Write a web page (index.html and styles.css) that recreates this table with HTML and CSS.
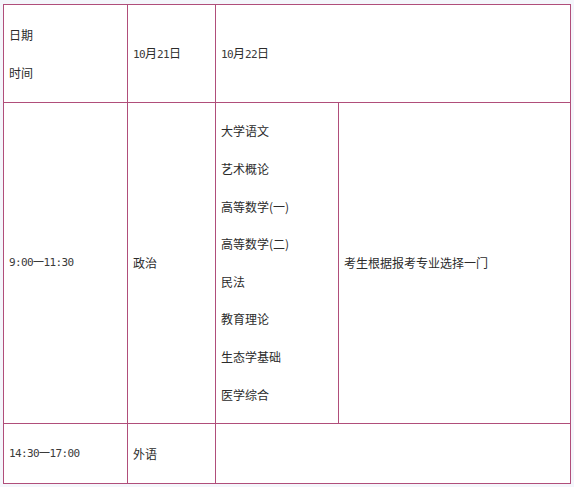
FILE: index.html
```html
<!DOCTYPE html>
<html lang="zh-CN">
<head>
<meta charset="utf-8">
<link rel="stylesheet" href="styles.css">
</head>
<body>
<div class="wrap">
<table class="exam">
  <colgroup>
    <col class="c1"><col class="c2"><col class="c3"><col class="c4">
  </colgroup>
  <tr class="r-head">
    <td><div class="stack"><span>日期</span><span>时间</span></div></td>
    <td><span class="num">10</span>月<span class="num">21</span>日</td>
    <td colspan="2"><span class="num">10</span>月<span class="num">22</span>日</td>
  </tr>
  <tr class="r-am">
    <td class="num">9:00一11:30</td>
    <td>政治</td>
    <td>
      <div class="subjects">
        <span>大学语文</span>
        <span>艺术概论</span>
        <span>高等数学<span class="paren">(一)</span></span>
        <span>高等数学<span class="paren">(二)</span></span>
        <span>民法</span>
        <span>教育理论</span>
        <span>生态学基础</span>
        <span>医学综合</span>
      </div>
    </td>
    <td>考生根据报考专业选择一门</td>
  </tr>
  <tr class="r-pm">
    <td class="num">14:30一17:00</td>
    <td>外语</td>
    <td colspan="2"></td>
  </tr>
</table>
</div>
</body>
</html>
```
FILE: styles.css
```css
html, body {
  margin: 0;
  padding: 0;
  background: #f4f6fb;
}
body {
  font-family: "Noto Sans CJK SC", "Noto Sans", sans-serif;
  font-size: 12px;
  color: #2b2b2b;
}
.wrap {
  padding: 4px 0 0 3px;
}
.exam {
  border-collapse: collapse;
  table-layout: fixed;
  width: 567px;
  background: #fff;
  border: 1px solid #c2467c;
}
.c1 { width: 124px; }
.c2 { width: 88px; }
.c3 { width: 123px; }
.c4 { width: 232px; }
.exam td {
  border: 1px solid #b04e7a;
  padding: 0 0 0 5px;
  vertical-align: middle;
  line-height: 18px;
}
.r-head td { height: 97px; }
.r-am td { height: 320px; }
.r-pm td { height: 59px; }
.stack {
  display: flex;
  flex-direction: column;
  gap: 20px;
}
.subjects {
  display: flex;
  flex-direction: column;
  gap: 19.6px;
}
.num {
  font-family: "DejaVu Sans Mono", monospace;
  font-size: 11px;
  letter-spacing: -0.6px;
  color: #3a3a3a;
}
td.num {
  font-size: 11px;
}
.paren {
  color: #2b2b2b;
}
```
